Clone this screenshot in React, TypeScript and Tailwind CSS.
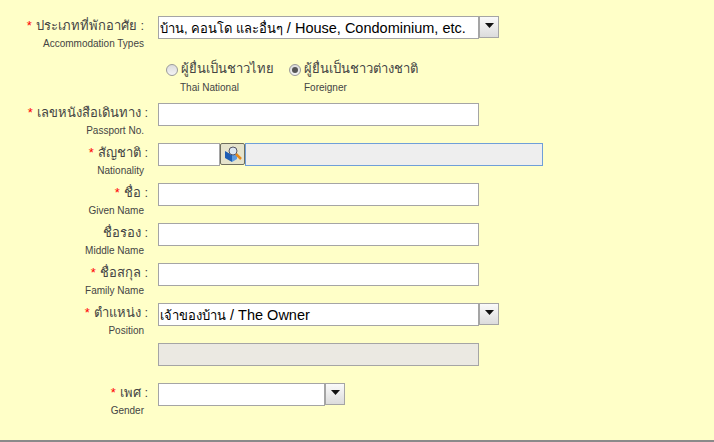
import { ReactNode } from "react";

const Arrow = () => (
  <button className="w-5 h-[22px] border border-[#a5a5a5] bg-gradient-to-b from-[#fafafa] to-[#dcdcdc] flex justify-center pt-[6px]">
    <svg width="9" height="5" viewBox="0 0 9 5"><path d="M0 0h9L4.5 5z" fill="#111" /></svg>
  </button>
);

const Field = ({ children, className = "w-[321px]" }: { children?: ReactNode; className?: string }) => (
  <div className={`shrink-0 h-[23px] bg-white border border-[#a5a5a5] pl-[1px] text-[14.5px] leading-[23px] text-black whitespace-nowrap overflow-hidden ${className}`}>
    {children}
  </div>
);

const Row = ({ th, en, req = true, flush, children }: { th: string; en: string; req?: boolean; flush?: boolean; children: ReactNode }) => (
  <div className="flex h-10">
    <div className="w-[144px] text-right">
      <div className={`h-[21px] text-[13px] leading-5 text-[#444] whitespace-nowrap ${flush ? "" : "-mr-1"}`}>
        {req && <span className="text-[#ff0000] mr-1">*</span>}
        {th} :
      </div>
      <div className="text-[10px] leading-[14px] text-[#444]">{en}</div>
    </div>
    <div className="ml-[14px] flex items-start">{children}</div>
  </div>
);

const Radio = ({ checked }: { checked?: boolean }) => (
  <span className="w-3 h-3 rounded-full border border-[#9a9a9a] bg-gradient-to-b from-[#dcdcdc] to-[#f4f4f4] flex items-center justify-center mt-[5px]">
    {checked && <span className="w-[6px] h-[6px] rounded-full bg-[#555]" />}
  </span>
);

export default function App() {
  return (
    <div className="w-[714px] h-[442px] bg-[#ffffc8] font-['Liberation_Sans','Noto_Sans',sans-serif] overflow-hidden pt-4 border-b-2 border-[#8a8a8a]">
      <Row th="ประเภทที่พักอาศัย" en="Accommodation Types" flush>
        <Field><span className="text-[13px]">บ้าน, คอนโด และอื่นๆ</span> / House, Condominium, etc.</Field>
        <Arrow />
      </Row>

      <div className="flex h-[47px] pl-[166px] pt-[3px] text-[#444]">
        <div className="w-[123px]">
          <div className="flex gap-[3px] text-[13px] leading-5 whitespace-nowrap">
            <Radio />
            ผู้ยื่นเป็นชาวไทย
          </div>
          <div className="text-[10px] leading-[14px] pt-[2px] pl-[14px]">Thai National</div>
        </div>
        <div>
          <div className="flex gap-[3px] text-[13px] leading-5 whitespace-nowrap">
            <Radio checked />
            ผู้ยื่นเป็นชาวต่างชาติ
          </div>
          <div className="text-[10px] leading-[14px] pt-[2px] pl-[15px]">Foreigner</div>
        </div>
      </div>

      <Row th="เลขหนังสือเดินทาง" en="Passport No.">
        <Field />
      </Row>
      <Row th="สัญชาติ" en="Nationality">
        <Field className="w-[62px]" />
        <button className="shrink-0 w-[25px] h-[22px] border border-[#6f6f5f] rounded-[2px] bg-[#e6e4cc] flex items-center justify-center">
          <svg width="18" height="17" viewBox="0 0 18 17">
            <path d="M1 5l7 4v7l-7-4z" fill="#1f5fb4" />
            <path d="M8 9l5-2v6l-5 3z" fill="#5b9ae0" />
            <circle cx="9" cy="5" r="4" fill="#dce6f0" stroke="#556" strokeWidth="1" />
            <path d="M12 8l5 5" stroke="#e8891a" strokeWidth="2.5" />
          </svg>
        </button>
        <div className="shrink-0 w-[298px] h-[23px] bg-[#eeeeee] border border-[#6f9fd8]" />
      </Row>
      <Row th="ชื่อ" en="Given Name">
        <Field />
      </Row>
      <Row th="ชื่อรอง" en="Middle Name" req={false}>
        <Field />
      </Row>
      <Row th="ชื่อสกุล" en="Family Name">
        <Field />
      </Row>
      <Row th="ตำแหน่ง" en="Position">
        <Field><span className="text-[13px]">เจ้าของบ้าน</span> / The Owner</Field>
        <Arrow />
      </Row>
      <div className="h-10 pl-[158px]">
        <div className="w-[321px] h-[23px] bg-[#ebe9e2] border border-[#a5a5a5]" />
      </div>
      <Row th="เพศ" en="Gender">
        <Field className="w-[167px]" />
        <Arrow />
      </Row>
    </div>
  );
}
